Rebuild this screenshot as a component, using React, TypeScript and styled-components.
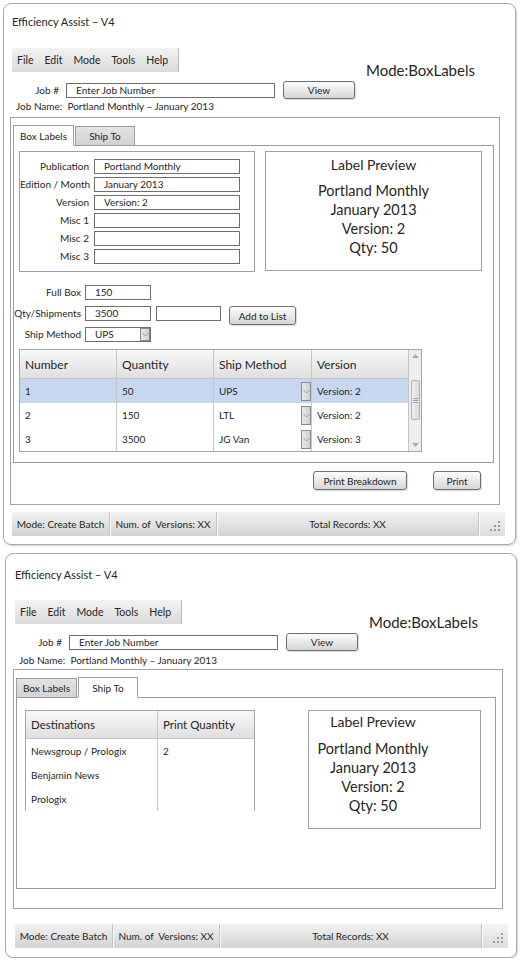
import React from "react";
import styled, { createGlobalStyle } from "styled-components";

const GlobalStyle = createGlobalStyle`
  body {
    margin: 0;
    background: #ffffff;
    font-family: Lato, "Open Sans", sans-serif;
    color: #262626;
  }
`;

const Page = styled.div`
  display: flex;
  flex-direction: column;
  width: 521px;
`;

const Window = styled.div<{ $left: number; $top: number; $width: number; $height: number; $pad: number }>`
  margin-left: ${(p) => p.$left}px;
  margin-top: ${(p) => p.$top}px;
  width: ${(p) => p.$width}px;
  height: ${(p) => p.$height}px;
  box-sizing: border-box;
  border: 1px solid #a9a9a9;
  border-radius: 8px;
  box-shadow: 1px 1px 2px rgba(0, 0, 0, 0.18);
  padding-left: ${(p) => p.$pad}px;
  display: flex;
  flex-direction: column;
`;

const Title = styled.div<{ $mt: number }>`
  margin: ${(p) => p.$mt}px 0 0 2px;
  font-size: 11px;
  line-height: 14px;
  height: 14px;
`;

const MenuRow = styled.div<{ $mt: number }>`
  margin-top: ${(p) => p.$mt}px;
  height: 24px;
  display: flex;
  align-items: flex-start;
`;

const MenuBar = styled.div`
  margin-left: 2px;
  width: 167px;
  height: 24px;
  box-sizing: border-box;
  padding-left: 5px;
  display: flex;
  align-items: center;
  gap: 11px;
  background: linear-gradient(#f3f3f3, #dadada);
  border-right: 1px solid #b8b8b8;
  font-size: 10.5px;
`;

const ModeLabel = styled.div`
  margin-left: 187px;
  margin-top: 13px;
  font-size: 15px;
  line-height: 18px;
  white-space: nowrap;
`;

const JobRow = styled.div<{ $mt: number }>`
  margin-top: ${(p) => p.$mt}px;
  height: 18px;
  display: flex;
  align-items: center;
`;

const JobLabel = styled.div`
  margin-left: 2px;
  width: 47px;
  text-align: right;
  font-size: 10px;
`;

const Field = styled.div<{ $w: number; $ml?: number }>`
  width: ${(p) => p.$w}px;
  margin-left: ${(p) => p.$ml ?? 0}px;
  height: 15px;
  box-sizing: border-box;
  border: 1px solid #6e6e6e;
  background: #fff;
  padding-left: 9px;
  font-size: 10px;
  line-height: 13px;
  white-space: nowrap;
  overflow: hidden;
`;

const Button = styled.div<{ $w: number; $ml?: number; $h?: number }>`
  width: ${(p) => p.$w}px;
  margin-left: ${(p) => p.$ml ?? 0}px;
  height: ${(p) => p.$h ?? 19}px;
  box-sizing: border-box;
  border: 1px solid #6f6f6f;
  border-radius: 3px;
  background: linear-gradient(#fdfdfd, #d6d6d6);
  box-shadow: 1px 1px 1px rgba(0, 0, 0, 0.15);
  display: flex;
  align-items: center;
  justify-content: center;
  font-size: 10px;
  white-space: nowrap;
`;

const JobName = styled.div<{ $mt: number }>`
  margin: ${(p) => p.$mt}px 0 0 6px;
  font-size: 10px;
  line-height: 14px;
  height: 14px;
`;

const Panel = styled.div<{ $mt: number; $h: number }>`
  margin-top: ${(p) => p.$mt}px;
  width: 490px;
  height: ${(p) => p.$h}px;
  box-sizing: border-box;
  border: 1px solid #a3a3a3;
  padding: 7px 0 0 2px;
  display: flex;
  flex-direction: column;
`;

const TabStrip = styled.div`
  display: flex;
  align-items: flex-end;
  gap: 1px;
  height: 21px;
  margin-bottom: -1px;
  position: relative;
  z-index: 1;
`;

const Tab = styled.div<{ $active?: boolean; $w: number }>`
  width: ${(p) => p.$w}px;
  height: ${(p) => (p.$active ? 21 : 20)}px;
  box-sizing: border-box;
  border: 1px solid #9c9c9c;
  border-bottom-color: ${(p) => (p.$active ? "#ffffff" : "#9c9c9c")};
  background: ${(p) => (p.$active ? "#ffffff" : "linear-gradient(#e2e2e2, #d3d3d3)")};
  display: flex;
  align-items: center;
  justify-content: center;
  font-size: 10px;
`;

const TabBox = styled.div<{ $w: number; $h: number }>`
  width: ${(p) => p.$w}px;
  height: ${(p) => p.$h}px;
  box-sizing: border-box;
  border: 1px solid #9c9c9c;
  background: #fff;
  display: flex;
  flex-direction: column;
`;

const TopSection = styled.div<{ $mt: number; $ml: number; $gap: number }>`
  margin: ${(p) => p.$mt}px 0 0 ${(p) => p.$ml}px;
  display: flex;
  align-items: flex-start;
  gap: ${(p) => p.$gap}px;
`;

const FormBox = styled.div`
  width: 236px;
  height: 121px;
  box-sizing: border-box;
  border: 1px solid #a0a0a0;
  padding-top: 5px;
  display: flex;
  flex-direction: column;
`;

const FormRow = styled.div`
  height: 18px;
  display: flex;
  align-items: center;
`;

const FormLabel = styled.div`
  width: 69px;
  margin-right: 5px;
  text-align: right;
  font-size: 10px;
  white-space: nowrap;
`;

const PreviewBox = styled.div<{ $w: number; $h: number; $pt: number; $pr: number }>`
  width: ${(p) => p.$w}px;
  height: ${(p) => p.$h}px;
  box-sizing: border-box;
  border: 1px solid #a0a0a0;
  padding: ${(p) => p.$pt}px ${(p) => p.$pr}px 0 0;
  display: flex;
  flex-direction: column;
  align-items: center;
`;

const PreviewTitle = styled.div<{ $mb: number }>`
  font-size: 14px;
  line-height: 18px;
  margin-bottom: ${(p) => p.$mb}px;
`;

const PreviewLine = styled.div`
  font-size: 14.5px;
  line-height: 19px;
  white-space: nowrap;
`;

const Controls = styled.div`
  margin-top: 10px;
  display: flex;
  flex-direction: column;
  gap: 1px;
`;

const CtrlRow = styled.div`
  height: 20px;
  display: flex;
  align-items: center;
`;

const CtrlLabel = styled.div`
  width: 67px;
  margin-right: 4px;
  text-align: right;
  font-size: 10px;
  white-space: nowrap;
`;

const RowButton = styled(Button)`
  align-self: flex-start;
  margin-top: 3px;
`;

const Select = styled.div`
  width: 66px;
  height: 15px;
  box-sizing: border-box;
  border: 1px solid #6e6e6e;
  display: flex;
  align-items: stretch;
  font-size: 10px;
`;

const SelectText = styled.div`
  flex: 1;
  padding-left: 9px;
  line-height: 13px;
`;

const DropBox = styled.div<{ $h: number }>`
  width: 10px;
  height: ${(p) => p.$h}px;
  box-sizing: border-box;
  border: 1px solid #8a8a8a;
  background: linear-gradient(90deg, #e9e9e9, #cfcfcf);
  display: flex;
  align-items: center;
  justify-content: center;
`;

const Table = styled.div<{ $w: number; $h: number; $mt: number; $ml: number }>`
  margin: ${(p) => p.$mt}px 0 0 ${(p) => p.$ml}px;
  width: ${(p) => p.$w}px;
  height: ${(p) => p.$h}px;
  box-sizing: border-box;
  border: 1px solid #a5a5a5;
  display: flex;
`;

const Grid = styled.div<{ $cols: string; $rows: string }>`
  flex: 1;
  display: grid;
  grid-template-columns: ${(p) => p.$cols};
  grid-template-rows: ${(p) => p.$rows};
`;

const HeadCell = styled.div<{ $size: number; $last?: boolean }>`
  background: linear-gradient(#f8f8f8, #dfdfdf);
  border-right: ${(p) => (p.$last ? "none" : "1px solid #c6c6c6")};
  border-bottom: 1px solid #c6c6c6;
  padding-left: 5px;
  display: flex;
  align-items: center;
  font-size: ${(p) => p.$size}px;
  white-space: nowrap;
`;

const Cell = styled.div<{ $selected?: boolean; $line?: boolean }>`
  background: ${(p) => (p.$selected ? "#c6d7ef" : "#ffffff")};
  border-right: ${(p) => (p.$line ? "1px solid #c6c6c6" : "none")};
  padding-left: 5px;
  display: flex;
  align-items: center;
  justify-content: space-between;
  font-size: 10px;
  white-space: nowrap;
`;

const ScrollTrack = styled.div`
  width: 12px;
  background: #eeeeee;
  border-left: 1px solid #c4c4c4;
  display: flex;
  flex-direction: column;
  align-items: center;
`;

const ScrollArrow = styled.div`
  width: 11px;
  height: 12px;
  display: flex;
  align-items: center;
  justify-content: center;
`;

const ScrollThumb = styled.div`
  margin-top: 18px;
  width: 9px;
  height: 40px;
  box-sizing: border-box;
  border: 1px solid #b3b3b3;
  border-radius: 2px;
  background: linear-gradient(90deg, #f2f2f2, #d8d8d8);
  display: flex;
  align-items: center;
  justify-content: center;
`;

const ScrollSpacer = styled.div`
  flex: 1;
`;

const ButtonsRow = styled.div`
  margin-top: 8px;
  padding-right: 18px;
  display: flex;
  justify-content: flex-end;
  gap: 26px;
`;

const StatusBar = styled.div<{ $mt: number }>`
  margin: ${(p) => p.$mt}px 0 0 2px;
  width: 493px;
  height: 24px;
  display: flex;
  background: linear-gradient(#f2f2f2, #d3d3d3);
  font-size: 10px;
`;

const StatusSeg = styled.div<{ $w?: number }>`
  ${(p) => (p.$w ? `width: ${p.$w}px;` : "flex: 1;")}
  border-right: 1px solid #c2c2c2;
  box-shadow: 1px 0 0 #fafafa;
  display: flex;
  align-items: center;
  justify-content: center;
  white-space: pre;
`;

const GripSeg = styled.div`
  width: 25px;
  margin-left: 1px;
  display: flex;
  align-items: flex-end;
  justify-content: flex-end;
  padding: 0 4px 4px 0;
  box-sizing: border-box;
  background: linear-gradient(#f4f4f4, #dcdcdc);
`;

const Chevron = () => (
  <svg width="7" height="5" viewBox="0 0 7 5">
    <path d="M0.5 1 L3.5 4 L6.5 1" stroke="#9a9a9a" strokeWidth="1" fill="none" />
  </svg>
);

const Tri = ({ up }: { up?: boolean }) => (
  <svg width="7" height="4" viewBox="0 0 7 4">
    <path d={up ? "M0 4 L3.5 0 L7 4 Z" : "M0 0 L3.5 4 L7 0 Z"} fill="#a8a8a8" />
  </svg>
);

const ThumbGrip = () => (
  <svg width="5" height="5" viewBox="0 0 5 5">
    <path d="M0 0.5 H5 M0 2.5 H5 M0 4.5 H5" stroke="#a0a0a0" strokeWidth="1" />
  </svg>
);

const Grip = () => (
  <svg width="12" height="12" viewBox="0 0 12 12">
    {[
      [9, 1],
      [5, 5],
      [9, 5],
      [1, 9],
      [5, 9],
      [9, 9],
    ].map(([x, y]) => (
      <rect key={`${x}-${y}`} x={x} y={y} width="2" height="2" fill="#9c9c9c" />
    ))}
  </svg>
);

const menuItems = ["File", "Edit", "Mode", "Tools", "Help"];

const formFields = [
  { label: "Publication", value: "Portland Monthly" },
  { label: "Edition / Month", value: "January 2013" },
  { label: "Version", value: "Version: 2" },
  { label: "Misc 1", value: "" },
  { label: "Misc 2", value: "" },
  { label: "Misc 3", value: "" },
];

const previewLines = ["Portland Monthly", "January 2013", "Version: 2", "Qty: 50"];

const shipments = [
  { n: "1", qty: "50", method: "UPS", version: "Version: 2", selected: true },
  { n: "2", qty: "150", method: "LTL", version: "Version: 2" },
  { n: "3", qty: "3500", method: "JG Van", version: "Version: 3" },
];

const destinations = [
  { name: "Newsgroup / Prologix", qty: "2" },
  { name: "Benjamin News", qty: "" },
  { name: "Prologix", qty: "" },
];

type Cfg = {
  titleMt: number;
  menuMt: number;
  jobMt: number;
  nameMt: number;
  panelMt: number;
  panelH: number;
  statusMt: number;
};

function Chrome({ cfg, active, children }: { cfg: Cfg; active: "box" | "ship"; children: React.ReactNode }) {
  return (
    <>
      <Title $mt={cfg.titleMt}>Efficiency Assist – V4</Title>
      <MenuRow $mt={cfg.menuMt}>
        <MenuBar>
          {menuItems.map((m) => (
            <span key={m}>{m}</span>
          ))}
        </MenuBar>
        <ModeLabel>Mode:BoxLabels</ModeLabel>
      </MenuRow>
      <JobRow $mt={cfg.jobMt}>
        <JobLabel>Job #</JobLabel>
        <Field $w={209} $ml={7}>Enter Job Number</Field>
        <Button $w={72} $ml={8} $h={18}>
          View
        </Button>
      </JobRow>
      <JobName $mt={cfg.nameMt}>Job Name:&nbsp; Portland Monthly – January 2013</JobName>
      <Panel $mt={cfg.panelMt} $h={cfg.panelH}>
        <TabStrip>
          <Tab $w={61} $active={active === "box"}>Box Labels</Tab>
          <Tab $w={60} $active={active === "ship"}>Ship To</Tab>
        </TabStrip>
        {children}
      </Panel>
    </>
  );
}

function StatusLine({ mt }: { mt: number }) {
  return (
    <StatusBar $mt={mt}>
      <StatusSeg $w={97}>Mode: Create Batch</StatusSeg>
      <StatusSeg $w={106}>Num. of  Versions: XX</StatusSeg>
      <StatusSeg>Total Records: XX</StatusSeg>
      <GripSeg>
        <Grip />
      </GripSeg>
    </StatusBar>
  );
}

function BoxLabelsWindow() {
  const cfg: Cfg = { titleMt: 11, menuMt: 19, jobMt: 9, nameMt: 0, panelMt: 4, panelH: 388, statusMt: 7 };
  return (
    <Window $left={3} $top={3} $width={513} $height={542} $pad={6}>
      <Chrome cfg={cfg} active="box">
        <TabBox $w={481} $h={318}>
          <TopSection $mt={5} $ml={5} $gap={10}>
            <FormBox>
              {formFields.map((f) => (
                <FormRow key={f.label}>
                  <FormLabel>{f.label}</FormLabel>
                  <Field $w={146}>{f.value}</Field>
                </FormRow>
              ))}
            </FormBox>
            <PreviewBox $w={217} $h={120} $pt={4} $pr={0}>
              <PreviewTitle $mb={7}>Label Preview</PreviewTitle>
              {previewLines.map((l) => (
                <PreviewLine key={l}>{l}</PreviewLine>
              ))}
            </PreviewBox>
          </TopSection>
          <Controls>
            <CtrlRow>
              <CtrlLabel>Full Box</CtrlLabel>
              <Field $w={66}>150</Field>
            </CtrlRow>
            <CtrlRow>
              <CtrlLabel>Qty/Shipments</CtrlLabel>
              <Field $w={66}>3500</Field>
              <Field $w={65} $ml={5} />
              <RowButton $w={67} $ml={8}>
                Add to List
              </RowButton>
            </CtrlRow>
            <CtrlRow>
              <CtrlLabel>Ship Method</CtrlLabel>
              <Select>
                <SelectText>UPS</SelectText>
                <DropBox $h={13}>
                  <Chevron />
                </DropBox>
              </Select>
            </CtrlRow>
          </Controls>
          <Table $w={403} $h={103} $mt={5} $ml={5}>
            <Grid $cols="97px 97px 98px 1fr" $rows="29px 24px 24px 24px">
              <HeadCell $size={12}>Number</HeadCell>
              <HeadCell $size={12}>Quantity</HeadCell>
              <HeadCell $size={12}>Ship Method</HeadCell>
              <HeadCell $size={12} $last>
                Version
              </HeadCell>
              {shipments.map((s) => (
                <React.Fragment key={s.n}>
                  <Cell $line $selected={s.selected}>{s.n}</Cell>
                  <Cell $line $selected={s.selected}>{s.qty}</Cell>
                  <Cell $line $selected={s.selected}>
                    {s.method}
                    <DropBox $h={19}>
                      <Chevron />
                    </DropBox>
                  </Cell>
                  <Cell $selected={s.selected}>{s.version}</Cell>
                </React.Fragment>
              ))}
            </Grid>
            <ScrollTrack>
              <ScrollArrow>
                <Tri up />
              </ScrollArrow>
              <ScrollThumb>
                <ThumbGrip />
              </ScrollThumb>
              <ScrollSpacer />
              <ScrollArrow>
                <Tri />
              </ScrollArrow>
            </ScrollTrack>
          </Table>
        </TabBox>
        <ButtonsRow>
          <Button $w={94}>Print Breakdown</Button>
          <Button $w={48}>Print</Button>
        </ButtonsRow>
      </Chrome>
      <StatusLine mt={cfg.statusMt} />
    </Window>
  );
}

function ShipToWindow() {
  const cfg: Cfg = { titleMt: 14, menuMt: 18, jobMt: 9, nameMt: 2, panelMt: 2, panelH: 240, statusMt: 15 };
  return (
    <Window $left={5} $top={8} $width={512} $height={405} $pad={7}>
      <Chrome cfg={cfg} active="ship">
        <TabBox $w={480} $h={192}>
          <TopSection $mt={12} $ml={8} $gap={53}>
            <Table $w={230} $h={101} $mt={0} $ml={0}>
              <Grid $cols="132px 1fr" $rows="28px 24px 24px 24px">
                <HeadCell $size={11.5}>Destinations</HeadCell>
                <HeadCell $size={11.5} $last>
                  Print Quantity
                </HeadCell>
                {destinations.map((d) => (
                  <React.Fragment key={d.name}>
                    <Cell $line>{d.name}</Cell>
                    <Cell>{d.qty}</Cell>
                  </React.Fragment>
                ))}
              </Grid>
            </Table>
            <PreviewBox $w={173} $h={119} $pt={2} $pr={43}>
              <PreviewTitle $mb={8}>Label Preview</PreviewTitle>
              {previewLines.map((l) => (
                <PreviewLine key={l}>{l}</PreviewLine>
              ))}
            </PreviewBox>
          </TopSection>
        </TabBox>
      </Chrome>
      <StatusLine mt={cfg.statusMt} />
    </Window>
  );
}

export default function App() {
  return (
    <Page>
      <GlobalStyle />
      <BoxLabelsWindow />
      <ShipToWindow />
    </Page>
  );
}
